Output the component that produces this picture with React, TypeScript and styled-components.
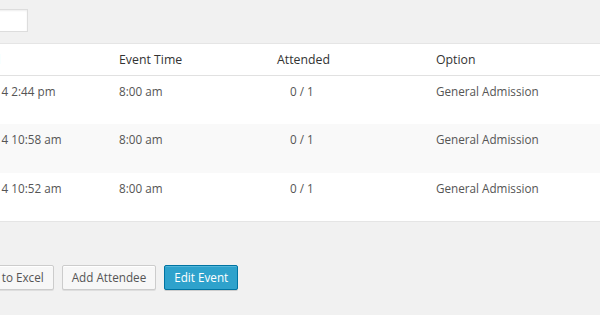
import React from "react";
import styled, { createGlobalStyle } from "styled-components";

const Global = createGlobalStyle`
  html, body { margin: 0; padding: 0; background: #f1f1f1; overflow: hidden; }
  body { font-family: "Open Sans", "Liberation Sans", sans-serif; }
`;

const Page = styled.div`
  width: 600px;
  height: 315px;
  overflow: hidden;
  background: #f1f1f1;
`;

const Canvas = styled.div`
  margin-left: -70px;
  width: 900px;
  padding-top: 9px;
`;

const Toolbar = styled.div`
  display: flex;
  height: 23px;
`;

const SearchInput = styled.input`
  box-sizing: border-box;
  width: 98px;
  height: 23px;
  margin: 0;
  border: 1px solid #dddddd;
  background: #ffffff;
  box-shadow: inset 0 1px 2px rgba(0, 0, 0, 0.07);
  outline: none;
`;

const Table = styled.table`
  margin-top: 11px;
  width: 900px;
  table-layout: fixed;
  border-collapse: collapse;
  background: #ffffff;
  border-top: 1px solid #e5e5e5;
  border-bottom: 1px solid #e5e5e5;
  font-size: 11.7px;
  color: #555555;
`;

const HeadCell = styled.th`
  height: 31px;
  padding: 0 10px;
  text-align: left;
  font-weight: 400;
  font-size: 12.3px;
  color: #333333;
  border-bottom: 1px solid #e1e1e1;
  vertical-align: middle;
`;

const Row = styled.tr<{ $alt?: boolean }>`
  background: ${(p) => (p.$alt ? "#f9f9f9" : "#ffffff")};
`;

const Cell = styled.td<{ $indent?: number }>`
  height: 48.5px;
  box-sizing: border-box;
  padding: 6px 10px 0 ${(p) => 10 + (p.$indent || 0)}px;
  vertical-align: top;
  line-height: 18px;
  white-space: nowrap;
`;

const Actions = styled.div`
  display: flex;
  gap: 8px;
  margin-top: 43px;
  padding-left: 23px;
`;

const Button = styled.button<{ $primary?: boolean }>`
  box-sizing: border-box;
  height: 25px;
  padding: 0 9px 1px;
  margin: 0;
  font-family: "Open Sans", "Liberation Sans", sans-serif;
  font-size: 11.7px;
  line-height: 22px;
  border-radius: 2px;
  border: 1px solid ${(p) => (p.$primary ? "#0074a2" : "#cccccc")};
  background: ${(p) => (p.$primary ? "#2ea2cc" : "#f7f7f7")};
  color: ${(p) => (p.$primary ? "#ffffff" : "#555555")};
  box-shadow: ${(p) =>
    p.$primary
      ? "inset 0 1px 0 rgba(120,200,230,0.5), 0 1px 0 rgba(0,0,0,0.15)"
      : "inset 0 1px 0 #fff, 0 1px 0 rgba(0,0,0,0.08)"};
  cursor: pointer;
`;

const rows = [
  { date: "July 14, 2014 2:44 pm", time: "8:00 am", att: "0 / 1", opt: "General Admission" },
  { date: "July 14, 2014 10:58 am", time: "8:00 am", att: "0 / 1", opt: "General Admission" },
  { date: "July 14, 2014 10:52 am", time: "8:00 am", att: "0 / 1", opt: "General Admission" },
];

export default function App() {
  return (
    <Page>
      <Global />
      <Canvas>
        <Toolbar>
          <SearchInput type="text" aria-label="Search" />
        </Toolbar>
        <Table>
          <colgroup>
            <col style={{ width: 179 }} />
            <col style={{ width: 158 }} />
            <col style={{ width: 159 }} />
            <col />
          </colgroup>
          <thead>
            <tr>
              <HeadCell>Purchased</HeadCell>
              <HeadCell>Event Time</HeadCell>
              <HeadCell>Attended</HeadCell>
              <HeadCell>Option</HeadCell>
            </tr>
          </thead>
          <tbody>
            {rows.map((r, i) => (
              <Row key={i} $alt={i === 1}>
                <Cell>{r.date}</Cell>
                <Cell>{r.time}</Cell>
                <Cell $indent={13}>{r.att}</Cell>
                <Cell>{r.opt}</Cell>
              </Row>
            ))}
          </tbody>
        </Table>
        <Actions>
          <Button>Export to Excel</Button>
          <Button>Add Attendee</Button>
          <Button $primary>Edit Event</Button>
        </Actions>
      </Canvas>
    </Page>
  );
}
